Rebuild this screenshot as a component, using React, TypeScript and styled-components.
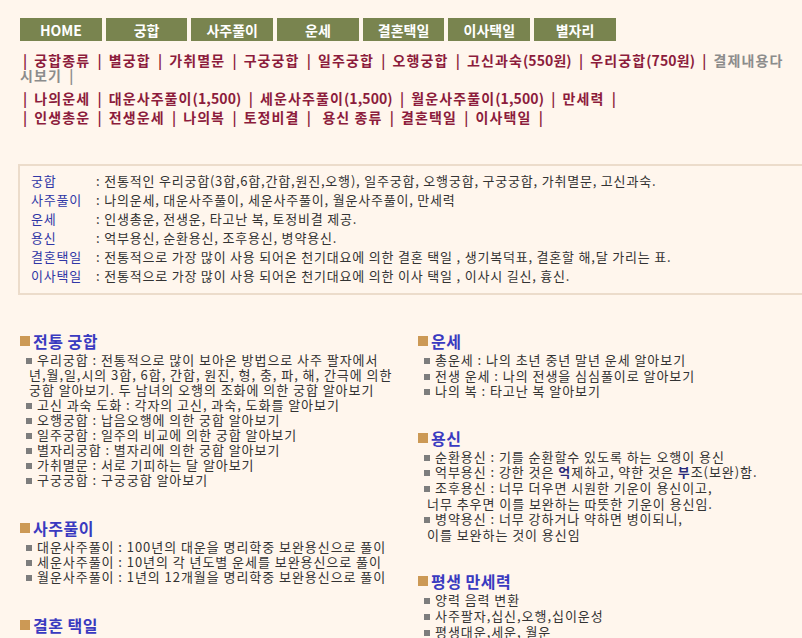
import { FC, Fragment } from 'react';
import styled, { createGlobalStyle } from 'styled-components';

const GlobalStyle = createGlobalStyle`
  html, body {
    margin: 0;
    padding: 0;
    background: #fff6ed;
    overflow-x: hidden;
  }
  body {
    font-family: "Noto Sans CJK KR", "Noto Sans", sans-serif;
    color: #333;
  }
`;

const Page = styled.div`
  padding: 18px 0 0 20px;
  width: 796px;
`;

const TopNav = styled.nav`
  display: flex;
  gap: 4px;
`;

const NavButton = styled.a`
  width: 81.7px;
  height: 23px;
  background: #79844f;
  color: #fff;
  font-size: 14px;
  font-weight: 700;
  display: flex;
  align-items: center;
  justify-content: center;
  text-decoration: none;
`;

const MenuBlock = styled.div<{ $gap: number }>`
  margin-top: ${(p) => p.$gap}px;
  font-size: 14px;
  font-weight: 700;
  line-height: 15px;
  white-space: nowrap;
  letter-spacing: 1.1px;
`;

const MenuLink = styled.a<{ $muted?: boolean }>`
  color: ${(p) => (p.$muted ? '#8c8c8c' : '#8c1c3c')};
  text-decoration: none;
`;

const Price = styled.span`
  letter-spacing: 0.1px;
`;

const Bar = styled.span<{ $muted?: boolean }>`
  color: ${(p) => (p.$muted ? '#8c8c8c' : '#8c1c3c')};
  margin: 0 6px 0 3px;
`;

const InfoBox = styled.div`
  margin: 39px 0 0 -2px;
  width: 820px;
  border: 2px solid #ecdccb;
  border-right: none;
  padding: 5px 0 8px 11px;
`;

const InfoRow = styled.div`
  display: flex;
  font-size: 13px;
  letter-spacing: 0.8px;
  line-height: 19px;
  white-space: nowrap;
`;

const InfoLabel = styled.span`
  width: 65px;
  flex: none;
  color: #3037a6;
`;

const InfoText = styled.span`
  color: #333;
`;

const Columns = styled.div`
  display: flex;
  margin-top: 36px;
`;

const Column = styled.div<{ $gap: number }>`
  width: 398px;
  flex: none;
  display: flex;
  flex-direction: column;
  gap: ${(p) => p.$gap}px;
`;

const Section = styled.section``;

const SectionTitle = styled.h3`
  margin: 0 0 1px;
  display: flex;
  align-items: center;
  gap: 3px;
  font-size: 16px;
  letter-spacing: 0.5px;
  font-weight: 700;
  color: #3a3ac0;
  line-height: 20px;
  &::before {
    content: '';
    width: 10px;
    height: 10px;
    background: #cc9955;
  }
`;

const ItemList = styled.ul<{ $loose?: boolean }>`
  margin: 0;
  padding: 0 0 0 6px;
  list-style: none;
  font-size: 13px;
  letter-spacing: 0.95px;
  line-height: ${(p) => (p.$loose ? '15.6px' : '15px')};
  color: #333;
  white-space: nowrap;
`;

const Item = styled.li`
  &::before {
    content: '';
    display: inline-block;
    width: 6px;
    height: 6px;
    background: #7d7d7d;
    margin-right: 5px;
    vertical-align: 1px;
  }
`;

const Wrap = styled.span`
  display: block;
  padding-left: 3px;
`;

const Strong = styled.b`
  color: #2a2a7a;
`;

type TLink = { text: string; price?: string; muted?: boolean; lead?: boolean };

const MenuRow: FC<{ links: TLink[]; gap: number; tail?: string }> = ({ links, gap, tail }) => (
  <MenuBlock $gap={gap}>
    <Bar>|</Bar>
    {links.map((l, i) => (
      <Fragment key={i}>
        {l.lead && ' '}
        <MenuLink $muted={l.muted}>
          {l.text}
          {l.price && <Price>{l.price}</Price>}
        </MenuLink>
        {!l.muted && <Bar> |</Bar>}
      </Fragment>
    ))}
    {tail && (
      <>
        <br />
        <MenuLink $muted>{tail}</MenuLink>
        <Bar $muted> |</Bar>
      </>
    )}
  </MenuBlock>
);

const navItems = ['HOME', '궁합', '사주풀이', '운세', '결혼택일', '이사택일', '별자리'];

const info = [
  ['궁합', ': 전통적인 우리궁합(3합,6합,간합,원진,오행), 일주궁합, 오행궁합, 구궁궁합, 가취멸문, 고신과숙.'],
  ['사주풀이', ':  나의운세, 대운사주풀이, 세운사주풀이, 월운사주풀이, 만세력'],
  ['운세', ': 인생총운, 전생운, 타고난 복, 토정비결 제공.'],
  ['용신', ': 억부용신, 순환용신, 조후용신, 병약용신.'],
  ['결혼택일', ': 전통적으로 가장 많이 사용 되어온 천기대요에 의한 결혼 택일 ,  생기복덕표, 결혼할 해,달 가리는 표.'],
  ['이사택일', ': 전통적으로 가장 많이 사용 되어온 천기대요에 의한 이사 택일 ,  이사시 길신, 흉신.'],
];

const App: FC = () => {
  return (
    <>
      <GlobalStyle />
      <Page>
        <TopNav>
          {navItems.map((n) => (
            <NavButton key={n}>{n}</NavButton>
          ))}
        </TopNav>

        <MenuRow
          gap={12}
          links={[
            { text: '궁합종류' },
            { text: '별궁합' },
            { text: '가취멸문' },
            { text: '구궁궁합' },
            { text: '일주궁합' },
            { text: '오행궁합' },
            { text: '고신과숙', price: '(550원)' },
            { text: '우리궁합', price: '(750원)' },
            { text: '결제내용다', muted: true },
          ]}
          tail="시보기"
        />
        <MenuRow
          gap={8}
          links={[
            { text: '나의운세' },
            { text: '대운사주풀이', price: '(1,500)' },
            { text: '세운사주풀이', price: '(1,500)' },
            { text: '월운사주풀이', price: '(1,500)' },
            { text: '만세력' },
          ]}
        />
        <MenuRow
          gap={4}
          links={[
            { text: '인생총운' },
            { text: '전생운세' },
            { text: '나의복' },
            { text: '토정비결' },
            { text: '용신 종류', lead: true },
            { text: '결혼택일' },
            { text: '이사택일' },
          ]}
        />

        <InfoBox>
          {info.map(([label, text]) => (
            <InfoRow key={label}>
              <InfoLabel>{label}</InfoLabel>
              <InfoText>{text}</InfoText>
            </InfoRow>
          ))}
        </InfoBox>

        <Columns>
          <Column $gap={31}>
            <Section>
              <SectionTitle>전통 궁합</SectionTitle>
              <ItemList>
                <Item>
                  우리궁합 : 전통적으로 많이 보아온 방법으로 사주 팔자에서
                  <Wrap>년,월,일,시의 3합, 6합, 간합, 원진, 형, 충, 파, 해, 간극에 의한</Wrap>
                  <Wrap>궁합 알아보기. 두 남녀의 오행의 조화에 의한 궁합 알아보기</Wrap>
                </Item>
                <Item>고신 과숙 도화 : 각자의 고신, 과숙, 도화를 알아보기</Item>
                <Item>오행궁합 : 납음오행에 의한 궁합 알아보기</Item>
                <Item>일주궁합 : 일주의 비교에 의한 궁합 알아보기</Item>
                <Item>별자리궁합 : 별자리에 의한 궁합 알아보기</Item>
                <Item>가취멸문 : 서로 기피하는 달 알아보기</Item>
                <Item>구궁궁합 : 구궁궁합 알아보기</Item>
              </ItemList>
            </Section>
            <Section>
              <SectionTitle>사주풀이</SectionTitle>
              <ItemList>
                <Item>대운사주풀이 : 100년의 대운을 명리학중 보완용신으로 풀이</Item>
                <Item>세운사주풀이 : 10년의 각 년도별 운세를 보완용신으로 풀이</Item>
                <Item>월운사주풀이 : 1년의 12개월을 명리학중 보완용신으로 풀이</Item>
              </ItemList>
            </Section>
            <Section>
              <SectionTitle>결혼 택일</SectionTitle>
            </Section>
          </Column>
          <Column $gap={29}>
            <Section>
              <SectionTitle>운세</SectionTitle>
              <ItemList $loose>
                <Item>총운세 : 나의 초년 중년 말년 운세 알아보기</Item>
                <Item>전생 운세 : 나의 전생을 심심풀이로 알아보기</Item>
                <Item>나의 복 : 타고난 복 알아보기</Item>
              </ItemList>
            </Section>
            <Section>
              <SectionTitle>용신</SectionTitle>
              <ItemList $loose>
                <Item>순환용신 : 기를 순환할수 있도록 하는 오행이 용신</Item>
                <Item>
                  억부용신 : 강한 것은 <Strong>억</Strong>제하고, 약한 것은 <Strong>부</Strong>조(보완)함.
                </Item>
                <Item>
                  조후용신 : 너무 더우면 시원한 기운이 용신이고,
                  <Wrap>너무 추우면 이를 보완하는 따뜻한 기운이 용신임.</Wrap>
                </Item>
                <Item>
                  병약용신 : 너무 강하거나 약하면 병이되니,
                  <Wrap>이를 보완하는 것이 용신임</Wrap>
                </Item>
              </ItemList>
            </Section>
            <Section>
              <SectionTitle>평생 만세력</SectionTitle>
              <ItemList $loose>
                <Item>양력 음력 변환</Item>
                <Item>사주팔자,십신,오행,십이운성</Item>
                <Item>평생대운,세운, 월운</Item>
              </ItemList>
            </Section>
          </Column>
        </Columns>
      </Page>
    </>
  );
};

export default App;
